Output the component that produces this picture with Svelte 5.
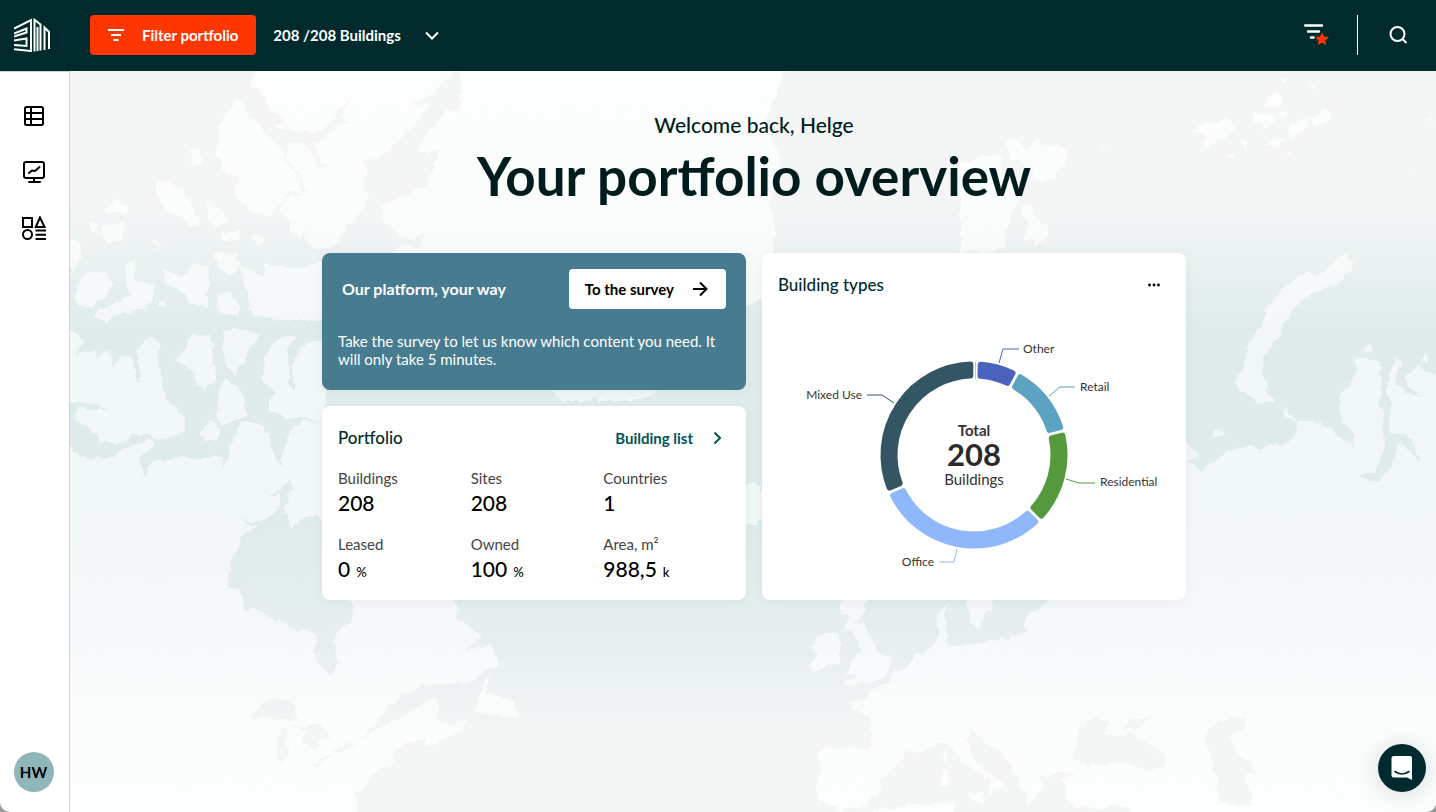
<script>
    const stats = [
        { label: 'Buildings', value: '208' },
        { label: 'Sites', value: '208' },
        { label: 'Countries', value: '1' },
        { label: 'Leased', value: '0', unit: '%' },
        { label: 'Owned', value: '100', unit: '%' },
        { label: 'Area, m²', value: '988,5', unit: 'k' }
    ];

    // angles in degrees, clockwise from the top
    const slices = [
        { name: 'Other', from: 1.5, to: 28, color: '#4a63bf', line: '221,62 225,48 241,48', x: 245, y: 52, anchor: 'start' },
        { name: 'Retail', from: 28, to: 74.8, color: '#5ca2c1', line: '271,95 282,86 297,86', x: 302, y: 90, anchor: 'start' },
        { name: 'Residential', from: 74.8, to: 134.7, color: '#55993d', line: '288,178 301,182 317,182', x: 322, y: 185, anchor: 'start' },
        { name: 'Office', from: 134.7, to: 246.1, color: '#8fb8fa', line: '179,248 176,261 161,261', x: 156, y: 265, anchor: 'end' },
        { name: 'Mixed Use', from: 246.1, to: 360.5, color: '#335564', line: '116,102 104,94 89,94', x: 84, y: 98, anchor: 'end' }
    ];

    const cx = 196;
    const cy = 154;
    const outer = 90.5;
    const inner = 79.5;
    const inset = 4.4;

    function point(r, a) {
        return `${(cx + r * Math.sin(a)).toFixed(2)} ${(cy - r * Math.cos(a)).toFixed(2)}`;
    }

    function arc(slice) {
        const from = (slice.from * Math.PI) / 180;
        const to = (slice.to * Math.PI) / 180;
        const o = Math.asin(inset / outer);
        const i = Math.asin(inset / inner);
        return `M${point(outer, from + o)}A${outer} ${outer} 0 0 1 ${point(outer, to - o)}L${point(inner, to - i)}A${inner} ${inner} 0 0 0 ${point(inner, from + i)}Z`;
    }
</script>

<div class="app">
    <header class="topbar">
        <a class="logo" href="#home" aria-label="Home">
            <svg width="36" height="34" viewBox="0 0 36 34" fill="none" stroke="#fff" stroke-width="2">
                <path d="M0 10.5 17 2V33L0 31.2M0 15.5 12.5 10.5V14.5L0 18.5M0 22.5 12.5 20.5V28L0 27" />
                <path d="M20.5 33.5V1.8L26.5 6.5V32.5M23.5 33V9M30.5 32V9.5L35 14V31" />
            </svg>
        </a>
        <button class="filter">
            <svg width="16" height="14" viewBox="0 0 16 14" stroke="#fff" stroke-width="2"><path d="M0 2H16M3 7H13M5.500 12H10.500" /></svg>
            Filter portfolio
        </button>
        <button class="count">
            208 /208 Buildings
            <svg width="14" height="9" viewBox="0 0 14 9" fill="none" stroke="#fff" stroke-width="2"><path d="M1 1.500 7 7.500 13 1.500" /></svg>
        </button>
        <div class="tools">
            <button class="icon-btn" aria-label="Saved filters">
                <svg width="26" height="24" viewBox="0 0 26 24">
                    <path d="M1 2.500H18M4 8.500H15M7 14.500H9.500" stroke="#fff" stroke-width="2.400" stroke-linecap="round" />
                    <path d="M18 9.500 20 13.500 25 14.200 21.300 17.500 22.300 22 18 19.700 13.700 22 14.700 17.500 11 14.200 16 13.500Z" fill="#ff3600" />
                </svg>
            </button>
            <span class="divider"></span>
            <button class="icon-btn" aria-label="Search">
                <svg width="20" height="20" viewBox="0 0 20 20" fill="none" stroke="#fff" stroke-width="2"><circle cx="9.500" cy="9" r="7" /><path d="M14.500 14 18.500 18" /></svg>
            </button>
        </div>
    </header>

    <div class="body">
        <nav class="sidebar">
            <a href="#list" aria-label="Buildings">
                <svg width="24" height="24" viewBox="0 0 24 24" fill="none" stroke="#000" stroke-width="2"><rect x="3" y="3" width="18" height="18" rx="1.500" /><path d="M3 9H21M3 15H21M9 3V21" /></svg>
            </a>
            <a href="#dashboard" aria-label="Dashboards">
                <svg width="24" height="24" viewBox="0 0 24 24" fill="none" stroke="#000" stroke-width="2" stroke-linecap="round" stroke-linejoin="round"><rect x="2" y="2" width="20" height="16" rx="2" /><path d="M12 18V22M7 22H18M7 13 10 10.500 13 11 17.500 7" /></svg>
            </a>
            <a href="#reports" aria-label="Categories">
                <svg width="24" height="24" viewBox="1 1 24 24" fill="none" stroke="#000" stroke-width="2"><rect x="2" y="3" width="9" height="9" /><path d="M19 2.500 14.800 12H23.500Z" /><circle cx="6.500" cy="19.500" r="4.500" /><path d="M14.500 15.500H25M14.500 19.700H25M14.500 24H25" /></svg>
            </a>
            <button class="avatar" aria-label="Profile">HW</button>
        </nav>

        <main>
            <svg class="map" viewBox="70 71 1366 741" preserveAspectRatio="xMidYMid slice" aria-hidden="true">
                <defs>
                    <linearGradient id="sea" gradientUnits="userSpaceOnUse" x1="0" y1="71" x2="0" y2="812">
                        <stop offset="0" stop-color="#f4f6f6" />
                        <stop offset="0.18" stop-color="#f4f6f6" />
                        <stop offset="0.34" stop-color="#e0ecec" />
                        <stop offset="0.62" stop-color="#e0ecec" />
                        <stop offset="0.76" stop-color="#e6eef0" />
                        <stop offset="0.9" stop-color="#f4f6f6" />
                        <stop offset="1" stop-color="#f4f6f6" />
                    </linearGradient>
                    <linearGradient id="land" gradientUnits="userSpaceOnUse" x1="0" y1="71" x2="0" y2="812">
                        <stop offset="0" stop-color="#fcfdfd" />
                        <stop offset="0.18" stop-color="#fbfdfc" />
                        <stop offset="0.36" stop-color="#f2f7f8" />
                        <stop offset="0.6" stop-color="#f2f7f8" />
                        <stop offset="0.76" stop-color="#f6f9fb" />
                        <stop offset="0.88" stop-color="#fbfdfc" />
                        <stop offset="1" stop-color="#fcfdfd" />
                    </linearGradient>
                    <filter id="coast" filterUnits="userSpaceOnUse" x="0" y="0" width="1500" height="900" color-interpolation-filters="sRGB">
                        <feTurbulence type="fractalNoise" baseFrequency="0.09" numOctaves="3" seed="4" />
                        <feDisplacementMap in="SourceGraphic" scale="9" xChannelSelector="R" yChannelSelector="G" />
                    </filter>
                </defs>
                <rect x="0" y="0" width="1506" height="900" fill="url(#sea)" />
                <g filter="url(#coast)">
                    <g fill="url(#land)">
                        <!-- Ellesmere and Greenland -->
                        <path d="M235 101 243 103 250 115 258 124 265 135 272 143 283 146 285 160 295 172 300 185 305 193 290 192 278 205 270 217 255 214 240 200 235 190 240 178 225 172 220 160 216 152 220 140 218 128 225 115Z" />
                        <path d="M262 60 250 85 262 92 270 112 284 118 277 126 295 131 317 132 334 121 340 108 350 99 342 115 352 121 333 130 327 138 311 143 320 160 327 168 318 166 308 148 303 143 288 144 287 160 300 172 307 190 315 188 300 195 287 198 278 212 290 220 290 232 300 241 312 226 305 242 320 248 340 243 345 225 355 222 363 208 368 195 360 185 367 175 365 160 377 160 390 150 397 140 410 130 430 105 408 104 428 97 437 90 453 73 455 60Z" />
                        <path d="M460 60 461 88 458 112 447 107 440 118 427 130 418 150 430 153 438 150 434 165 428 185 405 195 383 205 382 220 398 235 415 240 423 233 422 245 400 247 392 253 430 270 520 340 560 400 640 400 690 370 730 310 762 300 775 240 770 200 780 160 765 120 790 60Z" />
                        <!-- Arctic islands -->
                        <path d="M155 180 170 182 180 190 190 200 200 225 190 228 180 215 165 210 158 195ZM205 200 220 208 227 222 215 228 207 215ZM103 210 118 200 128 205 125 215 105 213ZM102 225 126 222 122 238 110 243 102 235ZM90 223 97 226 94 233ZM152 232 160 245 160 250 154 243ZM192 165 192 150 200 150 200 165 197 164ZM220 232 240 232 237 240 222 240ZM254 235 263 238 262 246 256 245Z" />
                        <path d="M70 240 83 243 80 258 72 273 66 260ZM80 280 90 270 105 272 112 285 105 295 93 305 80 307 73 300ZM127 265 135 260 135 278 143 285 153 283 154 295 143 310 120 313 105 322 94 318 98 310 118 302 130 295 125 282ZM162 268 180 275 195 264 207 265 209 290 206 307 190 307 182 290 165 283ZM215 253 237 255 240 268 230 275 218 268ZM160 299 166 300 166 307 160 306ZM220 294 230 292 237 303 237 315 220 312 216 305Z" />
                        <path d="M240 265 262 275 264 262 290 270 325 262 325 320 280 320 255 318 248 308 247 290ZM223 332 240 328 258 335 250 350 240 365 235 375 228 368 223 350ZM191 333 210 335 213 345 215 380 205 390 195 380 188 368 175 360 185 350ZM263 360 270 343 285 336 295 338 287 350 290 375 292 395 275 395 262 382ZM300 345 325 340 325 420 285 418 268 410 268 398 295 390 293 365ZM225 380 235 385 245 400 247 415 235 420 220 425 217 405 218 388ZM210 420 220 430 220 440 205 440 200 432Z" />
                        <!-- Canada -->
                        <path d="M60 320 70 327 85 343 74 357 95 347 97 357 110 353 113 368 120 355 132 358 137 380 141 382 137 350 142 342 157 355 161 375 162 395 185 417 180 435 160 440 133 433 123 442 100 443 95 432 75 420 77 410 110 410 87 403 60 403ZM142 342 155 338 161 345 156 355Z" />
                        <path d="M60 442 70 445 80 457 108 459 128 448 150 440 154 447 140 455 142 478 150 462 180 457 222 458 225 470 228 452 240 420 262 425 270 440 276 460 282 466 287 440 292 425 318 420 340 430 400 560 454 601 458 617 483 637 465 652 490 645 498 663 470 683 423 685 400 700 382 727 436 697 436 720 450 725 467 720 463 730 427 747 427 737 396 747 394 763 374 775 356 793 358 830 60 830ZM490 673 487 693 512 700 519 718 499 713 472 712Z" />
                        <!-- Iceland, Svalbard, Franz Josef -->
                        <path d="M700 490 725 483 762 485 766 505 757 525 740 523 712 520Z" />
                        <path d="M1007 145 1015 138 1027 150 1037 138 1042 148 1055 144 1067 152 1065 165 1055 178 1045 183 1035 180 1030 165 1010 160ZM960 160 1000 155 1003 175 1020 195 1010 220 1003 250 960 252ZM1020 208 1030 205 1035 218 1050 230 1038 245 1025 238 1028 222ZM1097 151 1111 147 1104 152Z" />
                        <path d="M1190 131 1205 123 1212 125 1218 122 1227 118 1235 125 1228 135 1215 142 1210 150 1203 145 1205 135ZM1240 142 1250 143 1245 148ZM1254 112 1270 113 1276 122 1265 130 1253 121ZM1263 103 1275 92 1283 98 1280 106 1268 108ZM1276 112 1286 113 1285 123ZM1290 122 1308 121 1303 132 1293 138 1289 130ZM1312 120 1325 108 1331 112 1330 122 1315 127ZM1279 80 1289 79 1286 84ZM1309 84 1318 86 1314 89ZM1265 145 1275 137 1287 140 1278 150ZM1226 155 1233 152 1234 158ZM1286 153 1292 152 1291 157ZM1424 121 1432 117 1434 122ZM1404 168 1412 170 1414 174Z" />
                        <!-- Novaya Zemlya and Eurasia -->
                        <path d="M1345 254 1355 262 1350 273 1335 283 1310 295 1295 308 1285 320 1280 335 1270 348 1262 360 1262 375 1267 390 1276 402 1260 403 1248 395 1240 392 1235 380 1243 370 1246 350 1251 338 1260 330 1265 310 1270 300 1285 288 1300 275 1318 275 1333 265ZM1284 408 1296 418 1295 422 1285 415ZM1214 428 1226 432 1220 438 1214 438ZM1363 352 1368 344 1373 350ZM1420 360 1426 354 1428 360Z" />
                        <path d="M1040 606 1026 617 1026 633 1008 638 981 643 950 647 946 630 946 603 937 613 940 635 932 647 915 657 892 677 890 683 870 690 865 700 850 702 852 708 868 717 872 733 870 749 821 748 819 753 821 770 816 790 821 802 832 803 841 810 865 805 881 788 883 777 901 763 906 750 923 752 941 742 950 745 959 760 990 780 990 797 1004 783 977 763 966 740 973 728 981 740 1008 760 1022 790 1030 803 1044 787 1040 777 1057 772 1075 770 1064 780 1066 803 1093 810 1129 805 1140 830 1460 830 1460 365 1436 375 1420 368 1403 377 1412 392 1424 397 1405 395 1396 380 1400 365 1397 353 1394 370 1385 383 1392 403 1388 430 1412 437 1420 460 1408 448 1398 442 1392 465 1379 482 1359 477 1376 470 1386 445 1382 430 1380 395 1381 360 1358 357 1353 377 1340 397 1342 423 1355 437 1353 447 1321 422 1298 420 1294 440 1267 447 1240 447 1214 460 1200 472 1189 462 1200 455 1187 443 1150 450 1100 560Z" />
                        <path d="M843 601 847 590 868 590 865 613 854 622 865 623 870 637 879 653 892 657 888 673 880 680 843 686 857 675 845 675 852 660 861 650 857 637 845 630 848 617 841 613ZM823 633 841 632 839 663 812 672 810 663 819 655 812 647ZM964 590 995 590 986 617 979 630 970 623ZM942 768 949 773 948 787 941 785ZM942 755 946 753 946 763ZM966 795 984 793 982 805ZM870 812 905 806 955 803 950 830 870 830Z" />
                    </g>
                    <g fill="url(#sea)">
                        <!-- Hudson Bay and the Great Lakes -->
                        <path d="M289 478 293 487 284 510 293 530 302 517 318 517 340 525 345 580 351 601 353 617 333 637 340 663 331 675 316 663 315 633 295 630 253 607 244 610 240 588 228 588 231 560 244 535 257 527 236 517 257 522 278 510 280 497 253 487 275 494Z" />
                        <path d="M247 718 272 698 290 700 300 720 280 720ZM280 730 287 728 287 755 281 765 276 750ZM290 727 320 725 330 738 318 738 315 750 305 745 306 732ZM307 764 335 754 318 766ZM332 750 350 742 356 747 338 752ZM395 700 420 687 425 690 390 720 360 740Z" />
                        <!-- Black Sea and Caspian -->
                        <path d="M1080 727 1093 718 1111 723 1104 733 1124 737 1133 733 1147 743 1167 757 1165 768 1151 770 1115 762 1089 767 1071 760 1077 747ZM1122 728 1129 720 1151 714 1140 728Z" />
                        <path d="M1203 737 1209 727 1231 716 1246 718 1245 730 1229 737 1236 750 1245 760 1256 770 1245 777 1252 805 1236 806 1218 800 1218 780 1209 753Z" />
                    </g>
                </g>
            </svg>

            <div class="content">
                <p class="welcome">Welcome back, Helge</p>
                <h1>Your portfolio overview</h1>

                <div class="cards">
                    <section class="card survey">
                        <div class="survey-head">
                            <h2>Our platform, your way</h2>
                            <button>
                                To the survey
                                <svg width="16" height="16" viewBox="0 0 16 16" fill="none" stroke="#000" stroke-width="2"><path d="M1 8H14M8 1.500 14.500 8 8 14.500" /></svg>
                            </button>
                        </div>
                        <p>Take the survey to let us know which content you need. It will only take 5 minutes.</p>
                    </section>

                    <section class="card types">
                        <div class="card-head">
                            <h2>Building types</h2>
                            <button class="more" aria-label="More">
                                <svg width="14" height="4" viewBox="0 0 14 4"><circle cx="2.500" cy="2" r="1.400" /><circle cx="7" cy="2" r="1.400" /><circle cx="11.500" cy="2" r="1.400" /></svg>
                            </button>
                        </div>
                        <svg class="chart" viewBox="0 0 392 283">
                            <path d="M197.500 61V78" stroke="#a9cfc0" />
                            {#each slices as slice}
                                <path d={arc(slice)} fill={slice.color} stroke={slice.color} stroke-width="6" stroke-linejoin="round" />
                                <polyline points={slice.line} fill="none" stroke={slice.color} />
                                <text x={slice.x} y={slice.y} text-anchor={slice.anchor}>{slice.name}</text>
                            {/each}
                            <text class="total" x={cx} y="135" text-anchor="middle">Total</text>
                            <text class="number" x={cx} y="165" text-anchor="middle">208</text>
                            <text class="what" x={cx} y="184" text-anchor="middle">Buildings</text>
                        </svg>
                    </section>

                    <section class="card portfolio">
                        <div class="card-head">
                            <h2>Portfolio</h2>
                            <a href="#list">
                                Building list
                                <svg width="9" height="14" viewBox="0 0 9 14" fill="none" stroke="#005557" stroke-width="2"><path d="M1.500 1.500 7 7 1.500 12.500" /></svg>
                            </a>
                        </div>
                        <dl>
                            {#each stats as stat}
                                <div>
                                    <dt>{stat.label}</dt>
                                    <dd>{stat.value}{#if stat.unit}<small>{stat.unit}</small>{/if}</dd>
                                </div>
                            {/each}
                        </dl>
                    </section>
                </div>
            </div>
        </main>
    </div>

    <button class="chat" aria-label="Open chat">
        <svg width="24" height="26" viewBox="0 0 24 26">
            <path d="M4 1H20Q22 1 22 3V25L17 22.500H4Q1.500 22.500 1.500 20V3Q1.500 1 4 1Z" fill="#fff" />
            <path d="M5 16.500Q12 21.500 19 16.500" fill="none" stroke="#002a2e" stroke-width="1.600" stroke-linecap="round" />
        </svg>
    </button>
</div>

<style>
    :global(body) {
        margin: 0;
        background: #9a9c9c;
    }

    .app {
        min-height: 100vh;
        display: flex;
        flex-direction: column;
        overflow: hidden;
        border-radius: 0 0 10px 10px;
        background: #fff;
        color: #000;
        font-family: Lato, 'Open Sans', sans-serif;
        font-size: 15px;
    }

    h1, h2, p, dl, dd {
        margin: 0;
    }

    button {
        border: none;
        background: none;
        padding: 0;
        font: inherit;
        color: inherit;
        cursor: pointer;
    }

    a {
        color: inherit;
        text-decoration: none;
    }

    svg {
        display: block;
        flex: none;
    }

    .topbar {
        display: flex;
        align-items: center;
        height: 71px;
        box-sizing: border-box;
        padding: 0 28px 1px 14px;
        background: #002a2c;
        color: #fff;
        font-weight: 700;
    }

    .filter {
        display: flex;
        align-items: center;
        gap: 18px;
        height: 40px;
        margin-left: 40px;
        padding: 0 18px;
        border-radius: 4px;
        background: #ff3600;
    }

    .count {
        display: flex;
        align-items: center;
        gap: 24px;
        padding: 0 16px 0 17px;
    }

    .tools {
        display: flex;
        align-items: center;
        gap: 27px;
        margin-left: auto;
    }

    .divider {
        width: 1px;
        height: 40px;
        margin-right: 3px;
        background: #fff;
    }

    .body {
        flex: 1;
        display: flex;
    }

    .sidebar {
        display: flex;
        flex-direction: column;
        align-items: center;
        gap: 32px;
        width: 70px;
        box-sizing: border-box;
        padding: 32px 2px 20px 0;
        border-top: 1px solid #c5d9da;
        border-right: 1px solid #c5d9da;
    }

    .avatar {
        width: 40px;
        height: 40px;
        margin-top: auto;
        border-radius: 50%;
        background: #8fb7b9;
        font-weight: 700;
    }

    main {
        position: relative;
        flex: 1;
    }

    .map {
        position: absolute;
        inset: 0;
        width: 100%;
        height: 100%;
    }

    .content {
        position: relative;
        max-width: 864px;
        margin: 0 auto;
        padding: 38px 16px 40px 18px;
        text-align: center;
        color: #001c1c;
    }

    .welcome {
        font-size: 21px;
        line-height: 32px;
        font-weight: 500;
    }

    h1 {
        font-size: 53px;
        line-height: 70px;
        font-weight: 700;
    }

    .cards {
        display: grid;
        grid-template-columns: 1fr 1fr;
        gap: 16px;
        margin-top: 42px;
        text-align: left;
    }

    .card {
        padding: 16px;
        border-radius: 8px;
        background: #fff;
        box-shadow: 0 2px 12px rgba(0, 60, 60, 0.06);
    }

    .card h2 {
        padding-bottom: 2px;
        font-size: 17px;
        font-weight: 500;
        color: #002a2c;
    }

    .card-head {
        display: flex;
        align-items: center;
        justify-content: space-between;
        height: 32px;
        padding-right: 8px;
    }

    .survey {
        padding-bottom: 20px;
        background: #477b90;
        color: #fff;
    }

    .survey-head {
        display: flex;
        align-items: center;
        justify-content: space-between;
        margin-bottom: 23px;
        padding: 0 4px;
    }

    .card.survey h2 {
        color: #fff;
        font-size: 16px;
        font-weight: 700;
    }

    .survey button {
        display: flex;
        align-items: center;
        gap: 18px;
        height: 40px;
        padding: 0 18px 0 16px;
        border-radius: 4px;
        background: #fff;
        color: #000;
        font-weight: 700;
    }

    .survey p {
        line-height: 18px;
        padding-bottom: 1px;
    }

    .types {
        grid-column: 2;
        grid-row: 1 / 3;
    }

    .more {
        padding: 8px 0;
    }

    .more svg {
        margin-right: 1px;
    }

    .chart {
        width: 100%;
        font-size: 12px;
        fill: #333;
    }

    .total {
        font-size: 15px;
        font-weight: 700;
    }

    .number {
        font-size: 31px;
        font-weight: 700;
        fill: #2b2b2b;
    }

    .what {
        font-size: 15px;
    }

    .portfolio a {
        display: flex;
        align-items: center;
        gap: 20px;
        color: #005557;
        font-weight: 700;
    }

    dl {
        display: grid;
        grid-template-columns: repeat(3, 1fr);
        gap: 16px 6px;
        margin-top: 13px;
    }

    dt {
        line-height: 22px;
        color: #444;
    }

    dd {
        font-size: 21px;
        line-height: 28px;
        font-weight: 500;
        color: #000;
    }

    small {
        margin-left: 6px;
        font-size: 13px;
        line-height: 1;
    }

    .chat {
        position: fixed;
        right: 10px;
        bottom: 20px;
        display: flex;
        align-items: center;
        justify-content: center;
        width: 48px;
        height: 48px;
        border-radius: 50%;
        background: #002a2e;
        box-shadow: 0 2px 24px rgba(0, 0, 0, 0.14);
    }
</style>
